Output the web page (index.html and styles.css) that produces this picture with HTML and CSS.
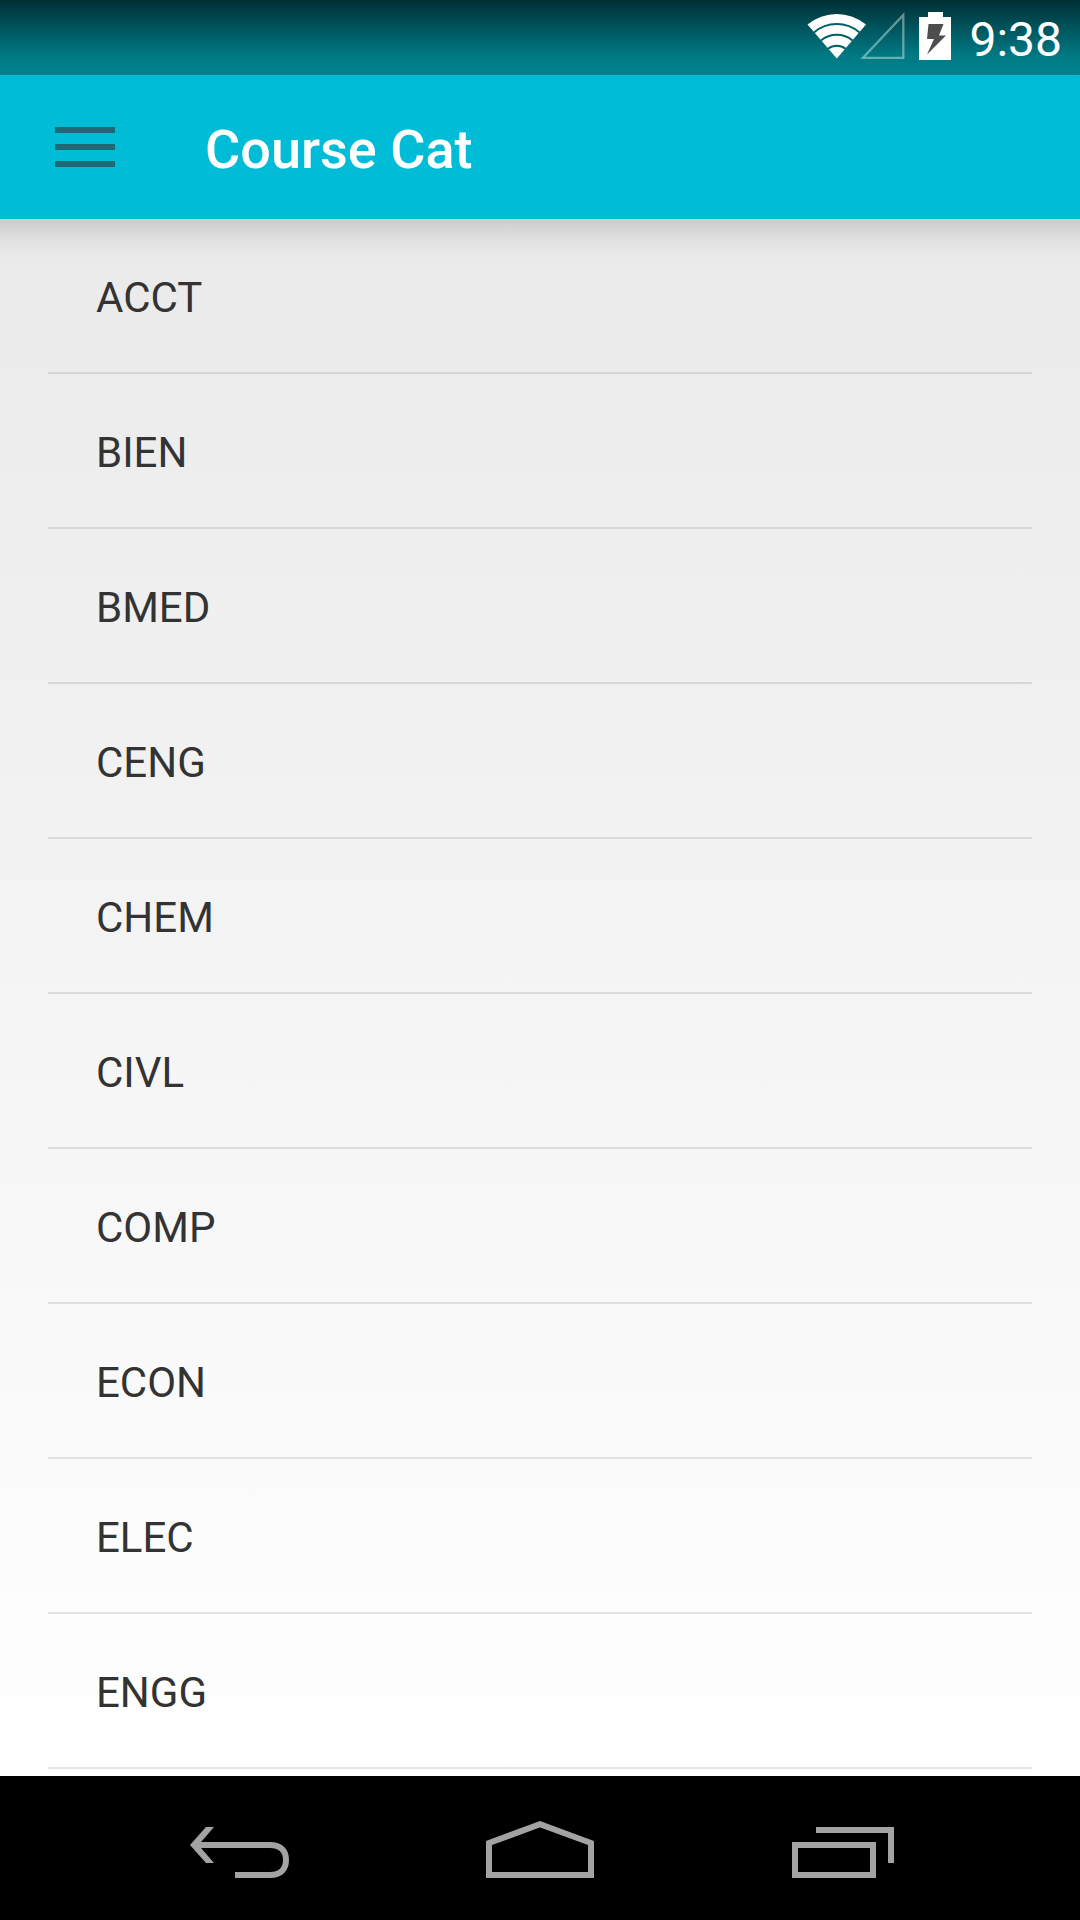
FILE: index.html
```html
<!DOCTYPE html>
<html lang="en">

<head>
    <meta charset="UTF-8">
    <meta name="viewport" content="width=device-width, initial-scale=1.0">
    <title>Course Cat</title>
    <link rel="stylesheet" href="styles.css">
</head>

<body>

    <div class="status-bar">
        <svg class="wifi-icon" width="60" height="46" viewBox="0 0 60 46">
            <path class="wifi-fill" d="M0.5 10.5 A46 46 0 0 1 59 10.5 L29.8 44.5 Z" />
            <path class="wifi-gap" d="M7 18.5 A35 35 0 0 1 52.5 18.5" />
            <path class="wifi-gap" d="M14 26.5 A24.5 24.5 0 0 1 45.5 26.5" />
            <path class="wifi-gap" d="M21 34.8 A14 14 0 0 1 38.5 34.8" />
        </svg>
        <svg class="signal-icon" width="46" height="50" viewBox="0 0 46 50">
            <path d="M3 46.8 L43.3 4 V46.8 Z" />
        </svg>
        <svg class="battery-icon" width="32" height="48" viewBox="0 0 32 48">
            <path class="battery-body" d="M9 0 H24 V5 H32 V48 H0 V5 H9 Z" />
            <path class="battery-bolt" d="M9.5 12 H24.5 L20 23.5 H27 L8 42.5 L15 27 H8 Z" />
        </svg>
        <span class="clock">9:38</span>
    </div>

    <div class="toolbar">
        <button class="menu-button" aria-label="Menu">
            <span></span>
            <span></span>
            <span></span>
        </button>
        <h1>Course Cat</h1>
    </div>

    <ul class="course-list">
        <li>ACCT</li>
        <li>BIEN</li>
        <li>BMED</li>
        <li>CENG</li>
        <li>CHEM</li>
        <li>CIVL</li>
        <li>COMP</li>
        <li>ECON</li>
        <li>ELEC</li>
        <li>ENGG</li>
    </ul>

    <div class="nav-bar">
        <svg width="120" height="144" viewBox="0 0 120 144">
            <path class="nav-fill" d="M10 69 L26 51 H34 L18.5 69 L34 87 H26 Z" />
            <path class="nav-line" d="M15 69 H90 C101 69 106 75 106 84 C106 93 101 99 90 99 H55" />
        </svg>
        <svg width="120" height="144" viewBox="0 0 120 144">
            <path class="nav-line" d="M9 99 V67 L60 48.3 L111 67 V99 Z" />
        </svg>
        <svg width="120" height="144" viewBox="0 0 120 144">
            <path class="nav-line" d="M15 69 H93 V99 H15 Z" />
            <path class="nav-line" d="M36 54 H111 V87" />
        </svg>
    </div>

</body>

</html>
```

FILE: styles.css
```css
* {
    box-sizing: border-box;
}

body {
    margin: 0;
    height: 1920px;
    display: flex;
    flex-direction: column;
    overflow: hidden;
    font-family: Roboto, sans-serif;
}

.status-bar {
    height: 75px;
    display: flex;
    align-items: flex-start;
    justify-content: flex-end;
    padding-right: 18px;
    background: linear-gradient(to bottom, #002f35, #007a84 75%, #00838f);
}

.wifi-icon {
    margin-top: 14px;
}

.wifi-fill {
    fill: #fff;
}

.wifi-gap {
    fill: none;
    stroke: #006068;
    stroke-width: 2;
}

.signal-icon {
    margin-top: 11px;
    margin-left: -7px;
    margin-right: 13px;
}

.signal-icon path {
    fill: none;
    stroke: #fff;
    stroke-opacity: 0.4;
    stroke-width: 2.3;
}

.battery-icon {
    margin-top: 12px;
    margin-right: 18px;
}

.battery-body {
    fill: #fff;
}

.battery-bolt {
    fill: #4d4d4d;
}

.clock {
    color: #fff;
    font-size: 48px;
    line-height: 56px;
    margin-top: 12px;
}

.toolbar {
    height: 144px;
    display: flex;
    align-items: center;
    padding-left: 55px;
    background-color: #00bcd7;
}

.menu-button {
    display: flex;
    flex-direction: column;
    gap: 11px;
    width: 60px;
    padding: 0;
    border: none;
    background: none;
}

.menu-button span {
    height: 6px;
    background-color: #1b6a75;
}

.toolbar h1 {
    margin: 5px 0 0 90px;
    color: #fff;
    font-size: 54px;
    font-weight: 500;
}

.course-list {
    height: 1557px;
    margin: 0;
    padding: 0 48px;
    list-style: none;
    background:
        linear-gradient(to bottom, rgba(0, 0, 0, 0.13), rgba(0, 0, 0, 0.04) 55%, rgba(0, 0, 0, 0)) top / 100% 40px no-repeat,
        linear-gradient(to bottom, #eaeaea, #fff);
}

.course-list li {
    height: 155px;
    padding: 4px 48px 0;
    border-bottom: 2px solid rgba(0, 0, 0, 0.1);
    color: #333;
    font-size: 42px;
    line-height: 150px;
}

.nav-bar {
    height: 144px;
    display: flex;
    justify-content: center;
    gap: 180px;
    background-color: #000;
}

.nav-fill {
    fill: #a3a3a3;
}

.nav-line {
    fill: none;
    stroke: #a3a3a3;
    stroke-width: 6;
}
```
